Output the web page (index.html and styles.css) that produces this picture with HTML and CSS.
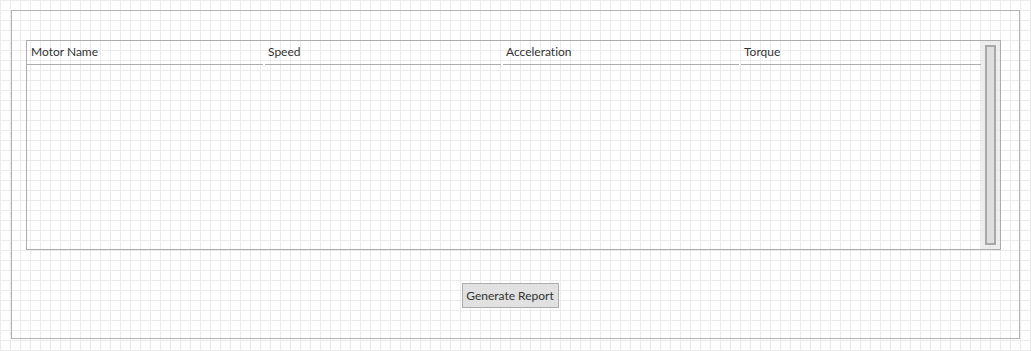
FILE: index.html
```html
<!DOCTYPE html>
<html lang="en">
<head>
    <meta charset="UTF-8">
    <meta name="viewport" content="width=device-width, initial-scale=1.0">
    <title>Motor Report</title>
    <link rel="stylesheet" href="styles.css">
</head>
<body>
    <div class="frame">
        <div class="motor-table">
            <div class="table-main">
                <div class="table-header">
                    <div class="col-head">Motor Name</div>
                    <div class="col-head">Speed</div>
                    <div class="col-head">Acceleration</div>
                    <div class="col-head">Torque</div>
                </div>
                <div class="table-body"></div>
            </div>
            <div class="scroll-track">
                <div class="scroll-thumb"></div>
            </div>
        </div>
        <div class="actions">
            <button class="report-btn">Generate Report</button>
        </div>
    </div>
</body>
</html>
```

FILE: styles.css
```css
body {
    font-family: Lato, "Liberation Sans", sans-serif;
    font-size: 12px;
    font-variant-ligatures: none;
    color: #333;
    margin: 0;
    padding: 10px 0 0 11px;
    background-color: #fff;
    background-image:
        linear-gradient(to right, #ebebeb 1px, transparent 1px),
        linear-gradient(to bottom, #ebebeb 1px, transparent 1px);
    background-size: 10px 10px;
    height: 351px;
    box-sizing: border-box;
    overflow: hidden;
}

.frame {
    width: 1009px;
    height: 329px;
    border: 1px solid #b4b4b4;
    box-sizing: border-box;
    padding: 29px 0 0 14px;
}

.motor-table {
    width: 975px;
    height: 210px;
    border: 1px solid #acacac;
    box-sizing: border-box;
    display: flex;
}

.table-main {
    flex: 1;
}

.table-header {
    display: grid;
    grid-template-columns: 236px 236px 236px 1fr;
    column-gap: 2px;
}

.col-head {
    height: 23px;
    line-height: 21px;
    padding-left: 4px;
    border-bottom: 1px solid #acacac;
}

.col-head + .col-head {
    padding-left: 3px;
}

.scroll-track {
    width: 19px;
    background: rgba(225, 225, 225, 0.6);
    padding: 4px;
    box-sizing: border-box;
}

.scroll-thumb {
    height: 100%;
    border: 2px solid #a8a8a8;
    background: #dedede;
    box-sizing: border-box;
}

.actions {
    display: flex;
    justify-content: center;
    padding: 33px 25px 0 0;
}

.report-btn {
    font-family: Lato, "Liberation Sans", sans-serif;
    font-size: 12px;
    font-variant-ligatures: none;
    color: #333;
    background: #e1e1e1;
    border: 1px solid #adadad;
    height: 25px;
    width: 97px;
    padding: 0;
}
```
